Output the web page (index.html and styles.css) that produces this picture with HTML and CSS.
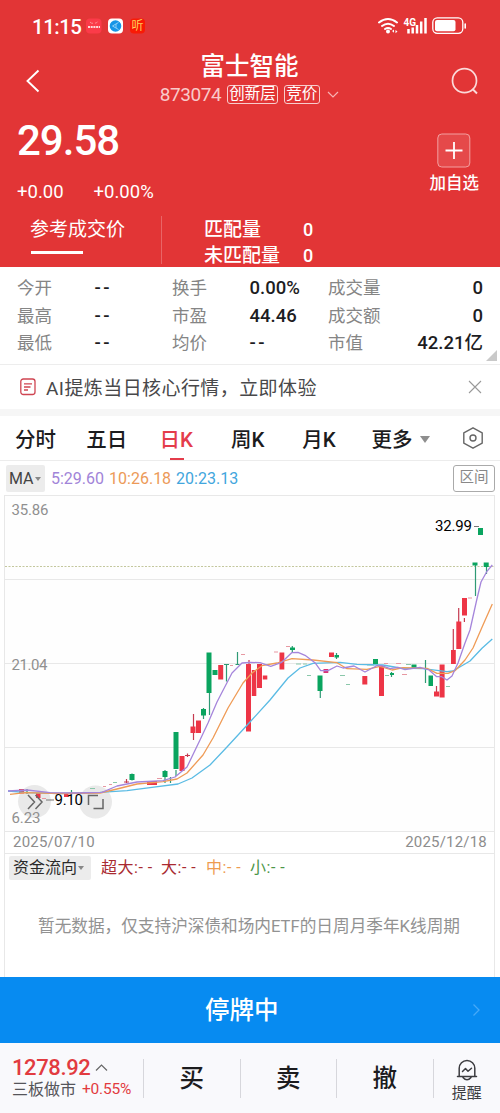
FILE: index.html
```html
<!DOCTYPE html>
<html lang="zh-CN">
<head>
<meta charset="utf-8">
<title>富士智能 873074</title>
<link rel="stylesheet" href="styles.css">
</head>
<body>
<div class="app">
  <header class="header">
    <div class="status">
      <span class="time">11:15</span>
      <svg class="app-icons" width="64" height="24" viewBox="86 14 64 24">
        <rect x="86" y="18.500" width="15.500" height="15" rx="4" fill="#fb3b49"/>
        <path d="M90 22q1 1.500 3 1.300M95 23.200q2-.2 2.500-1.500" stroke="#ff8f92" fill="none"/>
        <path d="M88 27h12" stroke="#ffd9d9" stroke-width="1.800" stroke-dasharray="2 .7"/>
        <rect x="108" y="18.500" width="15" height="15" rx="4" fill="#fff"/>
        <circle cx="115.500" cy="26" r="5.800" fill="#1795e6"/>
        <path d="M118.500 22.500l-6 3.500 6 3.500M116 24v4" stroke="#8ed0f8" fill="none"/>
        <rect x="130" y="18.500" width="15" height="15" rx="4" fill="#f91a05"/>
        <text x="131.500" y="30.200" class="ting">听</text>
      </svg>
      <svg class="signals" width="90" height="18" viewBox="377 17 90 18">
        <g fill="none" stroke="#fff" stroke-width="2" stroke-linecap="round">
          <path d="M379 22.500q9-7 18 0M382 26q6-4.600 12 0M385 29q3-2 6 0"/>
        </g>
        <circle cx="388" cy="31.500" r="2" fill="#fff"/>
        <path d="M392 31l2-1.500v3.200zM397.500 31.500l-2-1.500v3.200z" fill="#fff"/>
        <text x="403.500" y="25.500" class="net">4G</text>
        <path d="M408.500 29v4.500M412.700 27.500v6M417 25v8.500M421.200 21.500v12M425.500 18v15.500" stroke="#fff" stroke-width="2.500"/>
        <rect x="432.800" y="17.800" width="30" height="15.500" rx="4.500" fill="none" stroke="#fff" stroke-width="1.300"/>
        <rect x="435" y="20" width="20.500" height="11.200" rx="2" fill="#fff"/>
        <path d="M465.200 24v4" stroke="#fff" stroke-width="1.600" stroke-linecap="round"/>
      </svg>
    </div>
    <div class="nav">
      <svg width="16" height="26" viewBox="25 68 16 26"><path d="M38.500 70.500L27.500 81l11 10.500" fill="none" stroke="#fff" stroke-width="1.900"/></svg>
      <div class="nav-title">
        <h1>富士智能</h1>
        <div class="sub">
          <span class="code">873074</span><span class="tag">创新层</span><span class="tag">竞价</span>
          <svg width="12" height="8" viewBox="0 0 12 8"><path d="M1 1l5 5 5-5" fill="none" stroke="#f7b3b3" stroke-width="1.200"/></svg>
        </div>
      </div>
      <svg width="28" height="28" viewBox="451 67 28 28"><circle cx="464.500" cy="80.700" r="12" fill="none" stroke="#fbdada" stroke-width="1.700"/><path d="M472.500 89l4.500 4.500" stroke="#fbdada" stroke-width="1.900"/></svg>
    </div>
    <div class="quote">
      <div>
        <div class="price">29.58</div>
        <div class="change"><span>+0.00</span><span>+0.00%</span></div>
      </div>
      <div class="add">
        <svg width="34" height="35" viewBox="0 0 34 35"><rect x=".8" y="1" width="32" height="33" rx="4" fill="#fff" fill-opacity=".1" stroke="#f3a0a0"/><path d="M8.500 17.500h17M17 9v17" stroke="#fff" stroke-width="1.800"/></svg>
        <span>加自选</span>
      </div>
    </div>
    <div class="match">
      <div class="match-tab">参考成交价</div>
      <div class="match-list"><span>匹配量</span><b>0</b><span>未匹配量</span><b>0</b></div>
    </div>
  </header>

  <section class="stats">
    <span>今开</span><b class="none">--</b><span>换手</span><b>0.00%</b><span>成交量</span><b class="end">0</b>
    <span>最高</span><b class="none">--</b><span>市盈</span><b>44.46</b><span>成交额</span><b class="end">0</b>
    <span>最低</span><b class="none">--</b><span>均价</span><b class="none">--</b><span>市值</span><b class="end">42.21亿</b>
    <i class="corner"></i>
  </section>

  <section class="ai">
    <svg width="16" height="18" viewBox="0 0 16 18"><rect x=".8" y="1" width="14.200" height="15.500" rx="2.500" fill="none" stroke="#cf4552" stroke-width="1.300"/><path d="M4 5.800h8M4 9h6.500M4 12h4" stroke="#cf4552" stroke-width="1.300"/></svg>
    <span class="ai-text">AI提炼当日核心行情，立即体验</span>
    <svg width="14" height="14" viewBox="0 0 14 14"><path d="M1 1l12 12M13 1L1 13" stroke="#999" stroke-width="1.100"/></svg>
  </section>

  <nav class="tabs">
    <span>分时</span><span>五日</span><span class="active">日K</span><span>周K</span><span>月K</span><span class="more">更多<i></i></span>
    <svg width="22" height="24" viewBox="0 0 22 24"><path d="M11 1.800l9.200 5v10.400l-9.200 5-9.200-5V6.800z" fill="none" stroke="#666" stroke-width="1.400" stroke-linejoin="round"/><circle cx="11" cy="12" r="3" fill="none" stroke="#666" stroke-width="1.400"/></svg>
  </nav>

  <div class="ma">
    <span class="picker">MA<i></i></span>
    <span class="ma5">5:29.60</span><span class="ma10">10:26.18</span><span class="ma20">20:23.13</span>
    <span class="range">区间</span>
  </div>

  <svg class="chart" width="500" height="336" viewBox="0 495 500 336">
    <rect x="5" y="496" width="489" height="335" fill="#fefefe"/>
    <path class="grid" d="M4 495.500h491M4 579.500h491M4 663.500h491M4 747.500h491M4.500 495v336M494.500 495v336"/>
    <path d="M5 566.500h490" stroke="#c3c79d" stroke-dasharray="2 1.500"/>
    <circle cx="34.500" cy="801.500" r="16.500" fill="#e9e9e9"/>
    <circle cx="95.500" cy="802" r="16.500" fill="#e9e9e9"/>
    <g class="axis">
      <text x="11.500" y="515" textLength="37">35.86</text>
      <text x="11.500" y="670" textLength="36">21.04</text>
      <text x="11.500" y="823" textLength="29">6.23</text>
    </g>
    <path class="wg" d="M132 773.500v7M165 770v13M170.500 777v6M176 770v6M203.500 708v11M209.500 690v25M226.500 664.500v17M237.500 652v12.500M224 664.500h5M235.500 664.500h4M292.300 646v6M320.300 689v9M425.500 660v23M475.500 563v33M486.500 565v9M27 789v5M71.500 790v4M336.500 653v6M391.500 672v5"/>
    <path class="wr" d="M126.500 779v4M124 782h5M193.500 714v26M187.500 753.500v3.500M185 755.500h5M249 660v5M436.500 686v6M453.300 629v22M458.700 608v16M464.400 618v4"/>
    <path class="dr" d="M103 786.500h3M109 784.500h3M157 778.500h5M230 665.500h3M241 654.500h4M274 652h4M286 646.500h4M384 663.500h4M396 663.500h5M402 674.500h5M468 598h4M42 798.500h4"/>
    <path class="dg" d="M90 788.500h5M113 782.500h4M296 664h5M303 664h4M307 675.500h4M340 675.500h5M346 684.500h4M367 665h7M385 675.500h4M406 664.500h5M446 686.500h4"/>
    <g fill="#ed3546">
      <rect x="19" y="789" width="5" height="4.500"/><rect x="36" y="793" width="4.500" height="5"/><rect x="64" y="793" width="4.500" height="4"/>
      <rect x="147" y="781" width="10" height="4"/><rect x="179.500" y="756" width="5" height="15"/><rect x="190.500" y="726.500" width="5" height="6.500"/><rect x="196" y="720.500" width="5" height="12.500"/>
      <rect x="218.200" y="665" width="5" height="14.500"/><rect x="246" y="664" width="5" height="67.500"/><rect x="251.800" y="670" width="4.500" height="26"/><rect x="257" y="664" width="5" height="24"/><rect x="262.800" y="675.500" width="4.500" height="4"/>
      <rect x="279.500" y="652.500" width="4.800" height="17"/><rect x="323.500" y="669" width="4.800" height="4" fill="#dc3274"/><rect x="329" y="652.500" width="5" height="4.500"/><rect x="362.300" y="676" width="5" height="8.500"/><rect x="379" y="666" width="5" height="30"/>
      <rect x="434" y="691.500" width="5.200" height="5"/><rect x="439.600" y="664.500" width="5" height="33"/><rect x="451" y="650" width="4.800" height="14"/><rect x="456.300" y="621.500" width="5" height="27.500"/><rect x="462" y="598" width="5" height="17.500"/>
    </g>
    <g fill="#0aa45f">
      <rect x="129.500" y="774" width="5" height="6"/><rect x="162.500" y="771" width="5" height="6"/><rect x="173.500" y="732" width="5" height="37"/><rect x="201" y="709" width="5" height="6.500"/><rect x="206.500" y="652.500" width="5" height="40.500"/>
      <rect x="212.500" y="670" width="5" height="5"/><rect x="290" y="647.500" width="5" height="2.500"/><rect x="317.500" y="675.500" width="5" height="15.500"/><rect x="334.500" y="655" width="4.500" height="2.500"/><rect x="373" y="659" width="5" height="5"/>
      <rect x="390" y="673" width="4" height="2"/><rect x="411.500" y="664.500" width="5" height="4"/><rect x="428.500" y="675.500" width="4.500" height="10.500"/><rect x="478" y="528" width="5" height="7"/><rect x="472.500" y="562.500" width="5" height="3"/><rect x="483.700" y="562.500" width="5" height="4.500"/>
    </g>
    <g class="lines">
      <polyline stroke="#5abbe4" points="8,791 27,792.700 60,793.500 100,792.300 127,790.700 150,787.700 178,784 192,778 210,765 227,747 250,722 270,700 288,678 300,668 313,663.300 340,662.300 357,664.300 383,665 400,668 423,668.700 447,671.700 453,671 470,661 482,648.300 492.300,639"/>
      <polyline stroke="#ef9b56" points="10,794.300 25,792.700 60,793.500 100,793 117,789 137,784 163,781.700 177,779 187,773 203,755 213,738 228,708 243,683 252,673 262,665.700 277,663 292,658.700 313,660 337,662.700 347,668.700 367,669.300 380,666.300 392,670 403,667.700 427,668.300 437,673.300 448,673.300 455,670.700 465,660 473,648 483,625 492.300,604"/>
      <polyline stroke="#a585db" points="8,791 27,790 50,792.700 77,793 102,792.300 117,786 137,782 163,780.700 175,777 187,767 200,740 208,723 217,702 232,673 242,663 250,662.300 260,662.700 270.700,666.300 281.700,662.300 291.700,652.700 298,652.300 305,655.300 315,662.700 320.700,670.700 328,670.700 337,666 343,668 354,666 365,672 376.700,665.700 381.700,665.700 390,668.700 398,667.300 405,669.700 420,667.300 429,670 436.700,676.700 441.700,676.700 447,680 452,676 458,663 465,643 470,630 476.700,600 481,582 486.700,571.700 492.300,565"/>
    </g>
    <path d="M474 526.500h5M46 800h8" stroke="#777"/>
    <g class="mark"><text x="435" y="531" textLength="37">32.99</text><text x="54.500" y="805" textLength="28.500">9.10</text></g>
    <path d="M28 795l6.500 7-6.500 7M35.500 795l6.500 7-6.500 7M88.500 805v-9.500h9.500M93.500 808.500h9.500V799" fill="none" stroke="#666" stroke-width="1.500"/>
  </svg>

  <div class="panel">
    <div class="dates"><span>2025/07/10</span><span>2025/12/18</span></div>
    <div class="flow">
      <span class="picker flow-picker">资金流向<i></i></span>
      <span class="f1">超大:- -</span><span class="f2">大:- -</span><span class="f3">中:- -</span><span class="f4">小:- -</span>
    </div>
    <div class="empty">暂无数据，仅支持沪深债和场内ETF的日周月季年K线周期</div>
  </div>

  <div class="halt">
    <span>停牌中</span>
    <svg width="9" height="14" viewBox="0 0 9 14"><path d="M1.500 1.500L7 7l-5.500 5.500" fill="none" stroke="#46a9f8" stroke-width="1.300"/></svg>
  </div>

  <footer class="bar">
    <div class="index">
      <div class="index-value">1278.92<svg width="13" height="9" viewBox="0 0 13 9"><path d="M1 7.500L6.500 2 12 7.500" fill="none" stroke="#666" stroke-width="1.200"/></svg></div>
      <div class="index-name"><span>三板做市</span><b>+0.55%</b></div>
    </div>
    <div class="act">买</div><div class="act">卖</div><div class="act">撤</div>
    <div class="alert">
      <svg width="22" height="23" viewBox="0 0 22 23"><path d="M1.500 17.500h19M3.200 17V9.300a7.800 7.800 0 0 1 15.600 0V17M7 18.500q4 4.500 8 0M6.500 12.500l3-3 2.500 2.700 3.500-3" fill="none" stroke="#3c3c40" stroke-width="1.500" stroke-linecap="round" stroke-linejoin="round"/></svg>
      <span>提醒</span>
    </div>
  </footer>
</div>
</body>
</html>
```
FILE: styles.css
```css
* { box-sizing: border-box; }
body { margin: 0; font-family: Roboto, "Noto Sans CJK SC", sans-serif; color: #1c1c1e; background: #fff; }
svg { display: block; flex: none; }
b { font-weight: 500; }
.app { width: 500px; height: 1113px; display: flex; flex-direction: column; overflow: hidden; }

.header { height: 267px; background: #e23536; color: #fff; flex: none; }
.status { height: 51px; display: flex; align-items: center; padding: 1px 33px 0 32px; }
.time { font-size: 20.5px; font-weight: 500; letter-spacing: -.5px; width: 54px; padding-top: 2px; }
.ting { font: 12px "Noto Sans CJK SC", sans-serif; fill: #ffd05a; }
.signals { margin-left: auto; }
.net { font: 700 10px Roboto, sans-serif; fill: #fff; }

.nav { height: 60px; display: flex; justify-content: space-between; align-items: center; padding: 0 21px 0 25px; }
.nav-title { display: flex; flex-direction: column; align-items: center; padding: 0 0 3px 7px; }
h1 { margin: 0; font-size: 24.5px; line-height: 30px; font-weight: 500; }
.sub { display: flex; align-items: center; height: 25px; gap: 5.5px; }
.sub svg { margin-left: 2px; }
.code { font-size: 19px; letter-spacing: -.4px; color: #f9caca; }
.tag { font-size: 15.5px; line-height: 16px; height: 19px; border: 1px solid #f8cccc; border-radius: 3px; padding: 0 1.500px; }

.quote { display: flex; justify-content: space-between; height: 105px; padding: 0 21px 0 17px; }
.price { font-size: 42px; line-height: 50px; font-weight: 500; letter-spacing: -1px; margin-top: 5px; }
.change { display: flex; gap: 30px; font-size: 18.5px; line-height: 24px; margin-top: 14px; letter-spacing: 0; }
.add { display: flex; flex-direction: column; align-items: center; padding-top: 22px; font-size: 16.5px; font-weight: 500; }
.add span { line-height: 24px; margin-top: 4px; }
.match { display: flex; height: 48px; }
.match-tab { width: 162px; border-right: 1px solid #e96566; padding-left: 30px; font-size: 19px; line-height: 28px; }
.match-tab::after { content: ""; display: block; width: 52px; height: 3px; background: #fff; margin: 7px 0 0 1px; }
.match-list { display: grid; grid-template-columns: 99px auto; align-content: start; padding: 1px 0 0 42px; font-size: 19px; line-height: 26px; font-weight: 500; }
.match-list b { font-size: 18px; }

.stats { height: 98px; flex: none; display: grid; grid-template: repeat(3, 27.5px) / 77.5px 77.5px 77.5px 78.5px 70px 1fr; padding: 7px 17px 0; border-bottom: 1px solid #ededed; font-size: 17.5px; line-height: 28px; color: #858585; position: relative; }
.stats b { color: #1d1d1f; font-size: 18.5px; }
.stats .none { letter-spacing: 2.5px; }
.end { text-align: right; }
.corner { position: absolute; right: 3px; bottom: 3px; border: solid transparent; border-width: 0 0 11px 11px; border-bottom-color: #c9c9c9; }

.ai { height: 44px; flex: none; display: flex; align-items: center; padding: 0 18px 0 20px; font-size: 19px; color: #48484a; }
.ai-text { flex: 1; margin: -2px 0 0 10px; letter-spacing: .42px; white-space: nowrap; }

.tabs { height: 52px; flex: none; display: flex; align-items: center; border-top: 7px solid #f6f6f6; border-bottom: 1px solid #ececec; padding: 0 16px 1px 15px; font-size: 20.5px; font-weight: 500; }
.tabs span { width: 71.3px; }
.tabs span:nth-child(3) { padding-left: 2px; }
.tabs span:nth-child(4) { padding-left: 2px; }
.tabs span:nth-child(5) { padding-left: 2px; }
.active { color: #e43c4b; position: relative; }
.active::after { content: ""; position: absolute; left: 12px; bottom: -7px; width: 14px; height: 2px; background: #e43c4b; }
.tabs .more { display: flex; align-items: center; gap: 8px; }
.more i { border: solid transparent; border-width: 7px 5px 0; border-top-color: #8e8e8e; margin-top: 3px; }
.tabs svg { margin-left: auto; }

.ma { height: 34px; flex: none; display: flex; align-items: center; padding: 1px 5px 0 6px; gap: 5px; font-size: 16px; }
.picker { background: #ececec; border-radius: 2px; height: 27px; line-height: 27px; padding: 0 3px; display: flex; align-items: center; color: #444; width: 39px; }
.picker i { border: solid transparent; border-width: 4px 3.500px 0; border-top-color: #888; margin-left: 1px; flex: none; }
.ma5 { color: #a184d8; margin-left: 1px; }
.ma10 { color: #ec9a58; }
.ma20 { color: #42a6dd; }
.range { margin-left: auto; width: 42px; height: 27px; border: 1px solid #aaa; border-radius: 3px; color: #888; font-size: 14.5px; line-height: 24px; text-align: center; }

.chart { flex: none; }
.grid { stroke: #e8e8e8; fill: none; }
.axis { font: 15px Roboto, sans-serif; fill: #909090; }
.mark { font: 15px Roboto, sans-serif; fill: #000; }
.wg { stroke: #2f9a75; stroke-width: 1.200; }
.wr { stroke: #c53b50; stroke-width: 1.200; }
.dr { stroke: #e798a2; }
.dg { stroke: #8ac7aa; }
.lines { fill: none; stroke-width: 1.300; stroke-linejoin: round; }

.panel { height: 146px; flex: none; margin: 0 5px 0 4px; border: solid #e8e8e8; border-width: 1px 1px 0; }
.dates { height: 22px; display: flex; justify-content: space-between; padding: 0 7px 0 8px; border-bottom: 1px solid #e8e8e8; font-size: 15px; line-height: 21px; letter-spacing: .2px; color: #8d8d8d; }
.flow { display: flex; align-items: center; height: 27px; padding-left: 4px; font-size: 16px; white-space: nowrap; }
.flow-picker { width: 82px; height: 24px; line-height: 24px; padding: 0 4px; color: #2a2a2a; margin-right: 10px; }
.flow span:nth-child(n+2) { letter-spacing: .5px; line-height: 22px; }
.f1, .f2 { color: #a92a31; }
.f1 { width: 60px; }
.f2 { width: 45px; }
.f3 { width: 44px; color: #ee9b50; }
.f4 { color: #4c9648; }
.empty { font-size: 16.65px; line-height: 24px; margin-top: 34px; padding-left: 33px; color: #929292; white-space: nowrap; }

.halt { height: 66px; flex: none; background: #078bf1; color: #fff; display: flex; align-items: center; justify-content: space-between; padding: 0 19px 0 205px; font-size: 24.5px; font-weight: 500; }
.halt span { margin-top: -3px; }

.bar { height: 70px; flex: none; display: flex; align-items: center; background: #f9f9fc; }
.index { width: 143px; padding: 0 0 2px 12px; }
.index-value { display: flex; align-items: center; gap: 5px; font-size: 22px; line-height: 24px; font-weight: 500; letter-spacing: -.4px; color: #e23b40; }
.index-name { display: flex; align-items: center; gap: 6px; font-size: 16px; line-height: 19px; color: #55555a; }
.index-name b { color: #e23b40; font-size: 15.5px; letter-spacing: -.2px; font-weight: 400; }
.act { width: 96.500px; height: 39px; line-height: 40px; border-left: 1px solid #d7d7dc; text-align: center; font-size: 24.5px; font-weight: 500; }
.alert { flex: 1; height: 39px; border-left: 1px solid #d7d7dc; display: flex; flex-direction: column; align-items: center; font-size: 15px; color: #3c3c40; }
.alert span { line-height: 22px; }
```
